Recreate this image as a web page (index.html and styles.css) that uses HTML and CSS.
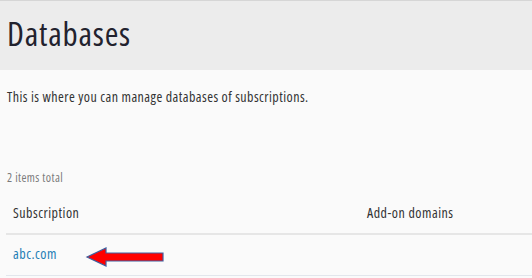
FILE: index.html
```html
<!DOCTYPE html>
<html>
<head>
<meta charset="utf-8">
<link rel="stylesheet" href="styles.css">
</head>
<body>
<div class="page-header">
  <h1 class="title">Databases</h1>
</div>
<p class="intro">This is where you can manage databases of subscriptions.</p>
<div class="total">2 items total</div>
<table class="list">
  <thead>
    <tr><th class="col-sub">Subscription</th><th>Add-on domains</th></tr>
  </thead>
  <tbody>
    <tr>
      <td class="col-sub cell-rel"><a class="link" href="#">abc.com</a>
        <svg class="arrow" width="80" height="22" viewBox="0 0 80 22">
          <polygon points="2,11 21,2 21,7 78,7 78,15 21,15 21,20" fill="#ff0000" stroke="#3f5f9f" stroke-width="1.2" stroke-linejoin="miter"/>
        </svg>
      </td>
      <td></td>
    </tr>
  </tbody>
</table>
</body>
</html>
```
FILE: styles.css
```css
html, body {
  margin: 0;
  padding: 0;
}
body {
  background: #fafafa;
  border-top: 1px solid #d6d6d6;
  font-family: "Open Sans", "DejaVu Sans", sans-serif;
  font-stretch: 75%;
  color: #333;
  width: 532px;
  height: 277px;
  overflow: hidden;
}
.page-header {
  background: #ececec;
  height: 69px;
  padding: 13px 0 0 7px;
  box-sizing: border-box;
}
.title {
  margin: 0;
  font-size: 33px;
  line-height: 40px;
  font-weight: 400;
  letter-spacing: 0.8px;
  color: #22222e;
}
.intro {
  margin: 17px 0 0 7px;
  font-size: 14px;
  line-height: 20px;
  letter-spacing: 0.45px;
  color: #333;
}
.total {
  margin: 63px 0 0 7px;
  font-size: 12px;
  line-height: 16px;
  letter-spacing: 0.4px;
  color: #7a7a7a;
}
.list {
  margin: 7px 0 0 6px;
  width: 526px;
  border-collapse: collapse;
  font-size: 14px;
  line-height: 20px;
  letter-spacing: 0.5px;
}
.list th {
  text-align: left;
  font-weight: 400;
  color: #333;
  padding: 10px 7px;
  border-bottom: 2px solid #e6e6e6;
}
.list td {
  padding: 9px 7px 11px;
  border-bottom: 1px solid #e2e6ec;
  height: 20px;
}
.col-sub {
  width: 340px;
}
.cell-rel {
  position: relative;
}
.link {
  color: #1d7db5;
  text-decoration: none;
}
.arrow {
  position: absolute;
  left: 79px;
  top: 11px;
}
```
